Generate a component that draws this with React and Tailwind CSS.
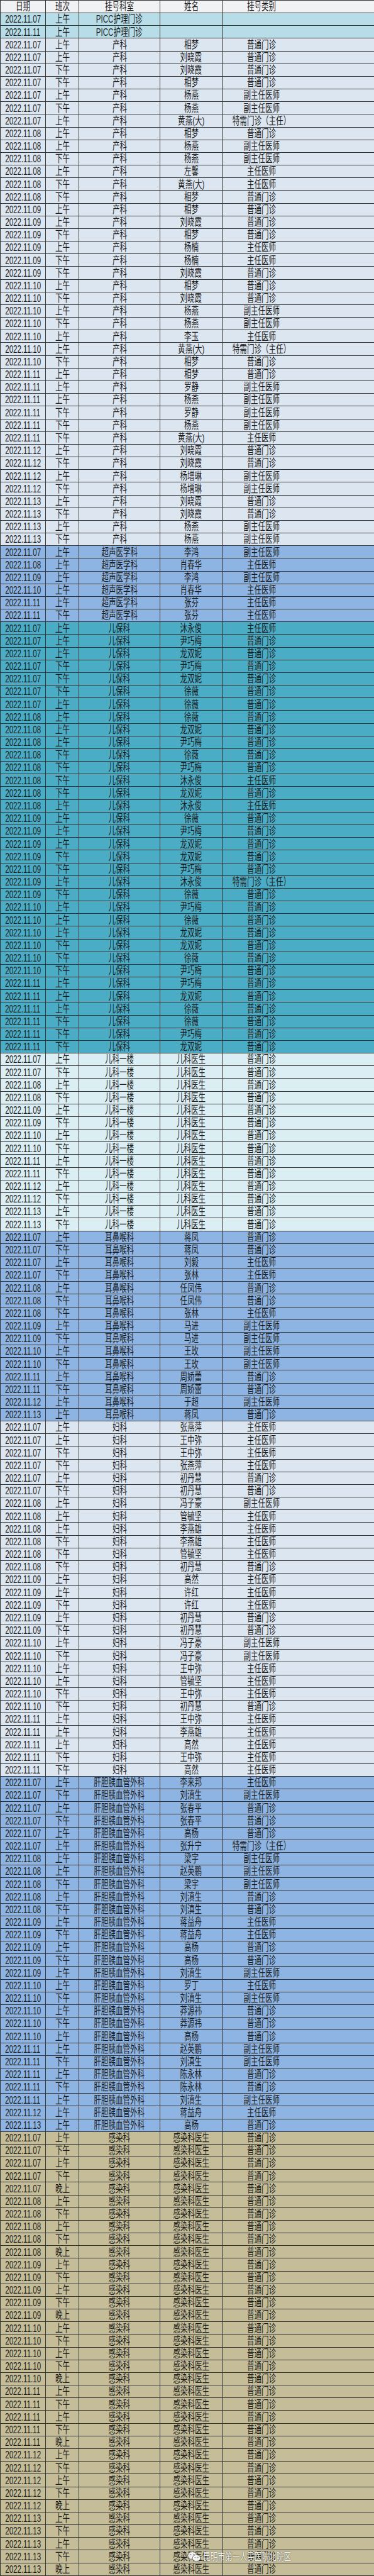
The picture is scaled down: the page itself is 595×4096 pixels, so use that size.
import React from "react";

const TYPES = { P: "普通门诊", F: "副主任医师", Z: "主任医师", T: "特需门诊（主任）", "-": "" };
const SHIFTS = { s: "上午", x: "下午", w: "晚上" };
const DAYS = ["07", "08", "09", "10", "11", "12", "13"];

const groups = [
  { dept: "PICC护理门诊", bg: "bg-[#b7dde8]", rows: ["07 s - -", "11 s - -"] },
  {
    dept: "产科",
    bg: "bg-[#dce6f1]",
    rows: [
      "07 s 相梦 P", "07 s 刘晓霞 P", "07 x 刘晓霞 P", "07 x 相梦 P", "07 s 杨燕 F",
      "07 x 杨燕 F", "07 s 黄燕(大) T", "08 s 相梦 P", "08 s 杨燕 F", "08 x 杨燕 F",
      "08 s 左馨 Z", "08 x 黄燕(大) Z", "08 x 相梦 P", "09 s 相梦 P", "09 s 刘晓霞 P",
      "09 x 相梦 P", "09 s 杨楠 Z", "09 x 杨楠 Z", "09 x 刘晓霞 P", "10 s 相梦 P",
      "10 x 刘晓霞 P", "10 s 杨燕 F", "10 x 杨燕 F", "10 s 李玉 Z", "10 s 黄燕(大) T",
      "10 x 相梦 P", "11 s 相梦 P", "11 s 罗静 F", "11 s 杨燕 F", "11 x 罗静 F",
      "11 x 杨燕 F", "11 x 黄燕(大) Z", "12 s 刘晓霞 P", "12 x 刘晓霞 P", "12 s 杨增琳 F",
      "12 x 杨增琳 F", "13 s 刘晓霞 P", "13 x 刘晓霞 P", "13 s 杨燕 F", "13 x 杨燕 F",
    ],
  },
  {
    dept: "超声医学科",
    bg: "bg-[#8db4e2]",
    rows: ["07 s 李鸿 F", "08 s 肖春华 Z", "09 s 李鸿 F", "10 s 肖春华 Z", "11 s 张芬 Z", "11 x 张芬 Z"],
  },
  {
    dept: "儿保科",
    bg: "bg-[#4bacc6]",
    rows: [
      "07 s 沐永俊 Z", "07 s 尹巧梅 P", "07 s 龙双妮 P", "07 x 尹巧梅 P", "07 x 龙双妮 P",
      "07 x 徐薇 P", "07 s 徐薇 P", "08 s 徐薇 P", "08 s 龙双妮 P", "08 s 尹巧梅 P",
      "08 x 徐薇 P", "08 x 尹巧梅 P", "08 x 沐永俊 Z", "08 x 龙双妮 P", "08 s 沐永俊 Z",
      "09 s 徐薇 P", "09 s 尹巧梅 P", "09 s 龙双妮 P", "09 x 龙双妮 P", "09 x 尹巧梅 P",
      "09 s 沐永俊 T", "09 x 徐薇 P", "10 s 尹巧梅 P", "10 s 徐薇 P", "10 s 龙双妮 P",
      "10 x 龙双妮 P", "10 x 徐薇 P", "10 x 尹巧梅 P", "11 s 尹巧梅 P", "11 s 龙双妮 P",
      "11 s 徐薇 P", "11 x 徐薇 P", "11 x 尹巧梅 P", "11 x 龙双妮 P",
    ],
  },
  {
    dept: "儿科一楼",
    bg: "bg-[#daeef3]",
    rows: DAYS.flatMap((d) => [`${d} s 儿科医生 P`, `${d} x 儿科医生 P`]),
  },
  {
    dept: "耳鼻喉科",
    bg: "bg-[#8db4e2]",
    rows: [
      "07 s 蒋凤 P", "07 x 蒋凤 P", "07 s 刘毅 Z", "07 x 张林 Z", "08 s 任凤伟 P",
      "08 x 任凤伟 P", "08 x 张林 Z", "09 s 马进 F", "09 x 马进 F", "10 s 王玫 F",
      "10 x 王玫 F", "11 s 周娇蕾 P", "11 x 周娇蕾 P", "12 s 于超 F", "13 s 蒋凤 P",
    ],
  },
  {
    dept: "妇科",
    bg: "bg-[#dce6f1]",
    rows: [
      "07 s 张燕萍 Z", "07 s 王中弥 Z", "07 x 王中弥 Z", "07 x 张燕萍 Z", "07 s 初丹慧 P",
      "07 x 初丹慧 P", "08 s 冯子豪 F", "08 s 管毓坚 Z", "08 s 李燕雄 Z", "08 x 李燕雄 Z",
      "08 x 管毓坚 Z", "08 x 初丹慧 P", "09 s 高然 Z", "09 s 许红 Z", "09 x 许红 Z",
      "09 s 初丹慧 P", "09 x 初丹慧 P", "10 s 冯子豪 F", "10 x 冯子豪 F", "10 s 王中弥 Z",
      "10 s 管毓坚 Z", "10 x 王中弥 Z", "10 x 初丹慧 P", "11 s 王中弥 Z", "11 s 李燕雄 Z",
      "11 s 高然 Z", "11 x 王中弥 Z", "11 x 高然 Z",
    ],
  },
  {
    dept: "肝胆胰血管外科",
    bg: "bg-[#8db4e2]",
    rows: [
      "07 s 李来邦 Z", "07 x 刘滇生 F", "07 s 张春平 P", "07 x 张春平 P", "07 s 高杨 P",
      "07 s 张升宁 T", "08 s 梁宇 F", "08 s 赵英鹏 F", "08 x 梁宇 F", "08 s 刘滇生 P",
      "08 x 刘滇生 P", "09 s 蒋益舟 Z", "09 x 蒋益舟 Z", "09 s 高杨 P", "09 x 高杨 P",
      "09 s 刘滇生 F", "10 s 罗丁 Z", "10 x 刘滇生 F", "10 s 莽源祎 P", "10 x 莽源祎 P",
      "10 s 高杨 P", "11 s 赵英鹏 F", "11 x 刘滇生 F", "11 s 陈永林 P", "11 x 陈永林 P",
      "11 s 刘滇生 F", "12 s 蒋益舟 Z", "13 s 高杨 P",
    ],
  },
  {
    dept: "感染科",
    bg: "bg-[#c4bd97]",
    rows: DAYS.flatMap((d) => ["s", "x", "s", "x", "w"].map((s) => `${d} ${s} 感染科医生 P`)),
  },
];

function Txt({ children }) {
  return (
    <span className="inline-block whitespace-nowrap text-[16.5px] leading-none scale-x-[0.7]">
      {children}
    </span>
  );
}

function Cell({ w, children }) {
  return (
    <div className={`${w} flex shrink-0 items-center justify-center border-r border-[#333] overflow-hidden`}>
      <Txt>{children}</Txt>
    </div>
  );
}

function Row({ cells, bg, h = "h-[20.18px]" }) {
  const [date, shift, dept, name, type] = cells;
  return (
    <div className={`flex ${h} border-b border-[#333] ${bg}`}>
      <Cell w="w-[72px]">{date}</Cell>
      <Cell w="w-[53px]">{shift}</Cell>
      <Cell w="w-[129px]">{dept}</Cell>
      <Cell w="w-[99px]">{name}</Cell>
      <div className="flex-1">
        <div className="flex h-full w-[124px] items-center justify-center">
          <Txt>{type}</Txt>
        </div>
      </div>
    </div>
  );
}

function WechatMark() {
  return (
    <svg width="22" height="19" viewBox="0 0 22 19">
      <ellipse cx="8" cy="7.5" rx="7.2" ry="6" fill="#fff" fillOpacity="0.85" stroke="#777" strokeWidth="1" />
      <path d="M3.5 12 L2.8 15 L6.2 13.1" fill="#fff" fillOpacity="0.85" stroke="#777" strokeWidth="1" />
      <ellipse cx="14.5" cy="11.5" rx="6.3" ry="5.2" fill="#fff" fillOpacity="0.9" stroke="#777" strokeWidth="1" />
      <path d="M17.8 15.8 L19.2 18.2 L16 16.6" fill="#fff" fillOpacity="0.9" stroke="#777" strokeWidth="1" />
      <circle cx="5.5" cy="6" r="0.9" fill="#777" />
      <circle cx="10.5" cy="6" r="0.9" fill="#777" />
      <circle cx="12.3" cy="10.5" r="0.8" fill="#777" />
      <circle cx="16.7" cy="10.5" r="0.8" fill="#777" />
    </svg>
  );
}

export default function App() {
  return (
    <div className="relative w-[595px] bg-white text-[#1c1c1c] font-['Liberation_Sans','Noto_Sans_CJK_SC',sans-serif]">
      <div className="border-l border-t border-[#333]">
        <Row cells={["日期", "班次", "挂号科室", "姓名", "挂号类别"]} bg="bg-[#f0f2f4]" h="h-[20px]" />
        {groups.map((g) =>
          g.rows.map((r, i) => {
            const [d, s, name, t] = r.split(" ");
            return (
              <Row
                key={g.dept + i}
                bg={g.bg}
                cells={[`2022.11.${d}`, SHIFTS[s], g.dept, name === "-" ? "" : name, TYPES[t]]}
              />
            );
          })
        )}
      </div>
      <div className="absolute left-[298px] top-[4056px] flex items-center gap-[3px]">
        <WechatMark />
        <span className="inline-block origin-left whitespace-nowrap text-[16px] leading-none text-white/95 scale-x-[0.73] [text-shadow:0_0_2px_rgba(0,0,0,0.7)]">
          昆明市第一人民医院北院区
        </span>
      </div>
    </div>
  );
}
